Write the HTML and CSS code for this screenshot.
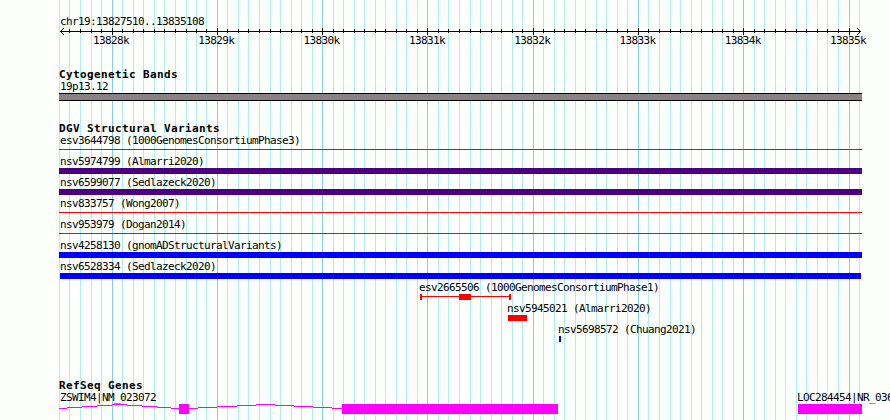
FILE: index.html
```
<!DOCTYPE html>
<html lang="en">
<head>
<meta charset="utf-8">
<title>chr19:13827510..13835108</title>
<link rel="stylesheet" href="styles.css">
</head>
<body>
<main class="browser">
  <svg class="grid" width="890" height="420" aria-hidden="true">
    <path id="minor" class="minor"/>
    <path id="major" class="major"/>
  </svg>

  <header class="ruler">
    <div class="label">chr19:13827510..13835108</div>
    <svg class="axis" width="803" height="8">
      <path d="M1 3.5H802M4.5 0v1M3.5 1v1M2.5 2v1M2.5 4v1M3.5 5v1M4.5 6v1M798.5 0v1M799.5 1v1M800.5 2v1M800.5 4v1M799.5 5v1M798.5 6v1"/>
      <path id="ticks"/>
    </svg>
    <div class="scale"><span>13828k</span><span>13829k</span><span>13830k</span><span>13831k</span><span>13832k</span><span>13833k</span><span>13834k</span><span>13835k</span></div>
  </header>

  <section class="track cytobands">
    <h2>Cytogenetic Bands</h2>
    <div class="label">19p13.12</div>
    <div class="band"></div>
  </section>

  <section class="track variants">
    <h2>DGV Structural Variants</h2>
    <div class="feature"><div class="label">esv3644798 (1000GenomesConsortiumPhase3)</div><div class="line"></div></div>
    <div class="feature"><div class="label">nsv5974799 (Almarri2020)</div><div class="bar indigo"></div></div>
    <div class="feature"><div class="label">nsv6599077 (Sedlazeck2020)</div><div class="bar indigo"></div></div>
    <div class="feature"><div class="label">nsv833757 (Wong2007)</div><div class="line"></div></div>
    <div class="feature"><div class="label">nsv953979 (Dogan2014)</div><div class="line"></div></div>
    <div class="feature"><div class="label">nsv4258130 (gnomADStructuralVariants)</div><div class="bar blue"></div></div>
    <div class="feature"><div class="label">nsv6528334 (Sedlazeck2020)</div><div class="bar blue inset"></div></div>
    <div class="feature esv2665506"><div class="label">esv2665506 (1000GenomesConsortiumPhase1)</div>
      <svg class="range" width="91" height="6"><path d="M0 0h2v6h-2zM89 0h2v6h-2zM2 2h87v1h-87zM39 0h12v6h-12z"/></svg></div>
    <div class="feature nsv5945021"><div class="label">nsv5945021 (Almarri2020)</div><div class="bar red"></div></div>
    <div class="feature nsv5698572"><div class="label">nsv5698572 (Chuang2021)</div><div class="bar blue"></div></div>
  </section>

  <section class="track genes">
    <h2>RefSeq Genes</h2>
    <div class="gene-row">
      <div class="gene zswim4"><div class="label">ZSWIM4|NM_023072</div>
        <svg class="exons" width="499" height="10">
          <path d="M0 4h8v1h-8zM8 3h15v1h-15zM23 2h15v1h-15zM38 1h15v1h-15zM53 0h15v1h-15zM68 1h15v1h-15zM83 2h15v1h-15zM98 3h14v1h-14zM112 4h8v1h-8zM120 0h10v10h-10zM130 4h9v1h-9zM139 3h19v1h-19zM158 2h20v1h-20zM178 1h19v1h-19zM197 0h19v1h-19zM216 1h19v1h-19zM235 2h19v1h-19zM254 3h19v1h-19zM273 4h10v1h-10zM283 0h216v10h-216z"/>
        </svg></div>
      <div class="gene loc"><div class="label">LOC284454|NR_036</div><div class="exon"></div></div>
    </div>
  </section>
</main>
<script src="grid.js"></script>
</body>
</html>
```
FILE: styles.css
```
* { box-sizing: border-box; }
body { margin: 0; background: #fdfffc; }
.browser {
  position: relative;
  z-index: 0;
  width: 890px;
  height: 420px;
  padding: 15px 0 0 59px;
  overflow: hidden;
  color: #000;
  font-family: "DejaVu Sans Mono", "Liberation Mono", monospace;
  font-size: 11px;
  letter-spacing: -0.622px;
  line-height: 13px;
  white-space: nowrap;
}
svg { display: block; shape-rendering: crispEdges; }
.grid { position: absolute; left: 0; top: 0; z-index: -1; }
.minor { stroke: #afeeee; }
.major { stroke: #87ceeb; }
.label { height: 13px; padding-left: 1px; }

.ruler { height: 51px; }
.axis { stroke: #000; fill: none; }
.scale { display: flex; padding-left: 34px; margin-top: -2px; }
.scale span { width: 105.3px; flex: none; }

h2 {
  margin: 0;
  height: 14px;
  line-height: 17px;
  font-size: 11px;
  font-weight: bold;
  letter-spacing: 0.378px;
}
.cytobands { height: 54px; }
.band {
  width: 803px;
  height: 8px;
  background: #888285;
  border: solid #000;
  border-width: 1px 0;
}

.variants { height: 257px; }
.feature { height: 21px; }
.bar { width: 803px; height: 6px; }
.line { width: 803px; height: 1px; margin-top: 2px; background: #f00; }
.indigo { background: #4b0082; }
.blue { background: #00f; }
.red { background: #f00; }
.inset { width: 801px; margin-left: 1px; }
.range { fill: #f00; margin-left: 1px; }
.esv2665506 { margin-left: 360px; }
.nsv5945021 { margin-left: 448px; }
.nsv5945021 .bar { width: 19px; margin-left: 1px; }
.nsv5698572 { margin-left: 499px; }
.nsv5698572 .bar { width: 2px; margin-left: 1px; }
.esv2665506 .label, .nsv5945021 .label, .nsv5698572 .label { padding-left: 0; }

.gene-row { display: flex; gap: 239px; }
.zswim4 { width: 499px; flex: none; }
.loc { width: 93px; flex: none; }
.loc .label { padding-left: 0; }
.exons { fill: #f0f; }
.exon { width: 64px; height: 10px; margin-left: 1px; background: #f0f; }
```
FILE: grid.js
```
const minor = [59,69,80,91,101,122,133,143,154,164,175,186,196,206,227,238,248,259,270,280,291,301,312,333,343,354,364,375,385,396,406,417,438,448,459,470,480,491,501,512,522,543,554,564,575,585,596,606,617,627,648,659,670,680,691,701,712,722,733,754,764,775,785,796,806,817,827,838,859];
const major = [112,217,322,427,533,638,743,849];
const lines = (xs, top, height, origin) => xs.map(x => `M${x - origin + 0.5} ${top}v${height}`).join('');
document.getElementById('minor').setAttribute('d', lines(minor, 0, 420, 0));
document.getElementById('major').setAttribute('d', lines(major, 0, 420, 0));
document.getElementById('ticks').setAttribute('d',
  lines(minor.filter(x => x > 60 && x < 859), 1, 4, 59) + lines(major, 0, 7, 59));
```
